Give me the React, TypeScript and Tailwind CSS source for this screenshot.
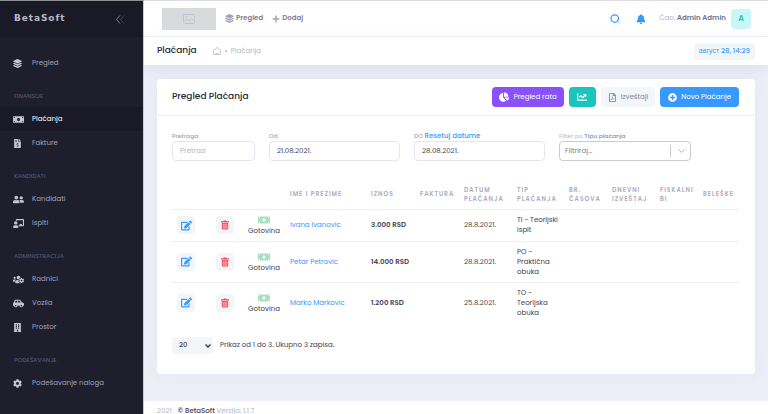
import type { ReactNode } from "react";
import {
  FaBell,
  FaBuilding,
  FaCarSide,
  FaChalkboardTeacher,
  FaChartLine,
  FaChartPie,
  FaCog,
  FaEdit,
  FaFileInvoiceDollar,
  FaLayerGroup,
  FaMoneyBill,
  FaPlus,
  FaPlusCircle,
  FaRegFilePdf,
  FaUserFriends,
  FaUsersCog,
} from "react-icons/fa";
import type { IconType } from "react-icons";

type MenuItem = { label: string; icon: IconType; active?: boolean; wide?: boolean };
type MenuSection = { title?: string; items: MenuItem[] };

const MENU: MenuSection[] = [
  { items: [{ label: "Pregled", icon: FaLayerGroup }] },
  {
    title: "Finansije",
    items: [
      { label: "Plaćanja", icon: FaMoneyBill, active: true, wide: true },
      { label: "Fakture", icon: FaFileInvoiceDollar },
    ],
  },
  {
    title: "Kandidati",
    items: [
      { label: "Kandidati", icon: FaUserFriends, wide: true },
      { label: "Ispiti", icon: FaChalkboardTeacher, wide: true },
    ],
  },
  {
    title: "Administracija",
    items: [
      { label: "Radnici", icon: FaUsersCog, wide: true },
      { label: "Vozila", icon: FaCarSide, wide: true },
      { label: "Prostor", icon: FaBuilding },
    ],
  },
  { title: "Podešavanje", items: [{ label: "Podešavanje naloga", icon: FaCog }] },
];

const PAYMENTS = [
  { name: "Ivana Ivanovic", amount: "3.000 RSD", date: "28.8.2021.", type: "TI - Teorijski ispit" },
  { name: "Petar Petrovic", amount: "14.000 RSD", date: "28.8.2021.", type: "PO - Praktična obuka" },
  { name: "Marko Markovic", amount: "1.200 RSD", date: "25.8.2021.", type: "TO - Teorijska obuka" },
];

const HEADINGS = [
  "",
  "",
  "",
  "Ime i prezime",
  "Iznos",
  "Faktura",
  "Datum plaćanja",
  "Tip plaćanja",
  "Br. časova",
  "Dnevni izveštaj",
  "Fiskalni bi",
  "Beleške",
];

function TrashIcon() {
  return (
    <svg viewBox="0 0 16 18" className="h-[10px] w-2" aria-hidden="true">
      <path d="M5.5 0h5l1 1.5H16V4H0V1.5h4.5z" fill="#f64e60" />
      <path d="M1.5 5h13v11.5A1.5 1.5 0 0 1 13 18H3a1.5 1.5 0 0 1-1.5-1.5z" fill="#f64e60" />
      <path d="M3 6.500h10v10H3z" fill="#f98896" />
    </svg>
  );
}

function Sidebar() {
  return (
    <aside className="relative z-10 w-36 shrink-0 border-t border-r border-t-[#8f8f96] border-r-[#c9c9d6] bg-[#1e1e2d]">
      <div className="flex h-9 items-center justify-between bg-[#1a1a27] pr-[18px] pl-[14px]">
        <a href="#" className="font-['DejaVu_Sans',sans-serif] text-[9px] font-bold tracking-widest text-[#b9b9c4]">
          BetaSoft
        </a>
        <button type="button" aria-label="Skupi meni">
          <svg viewBox="0 0 18 18" className="h-[9px] w-[9px]" fill="none" strokeWidth="2">
            <path d="M8 1 1 9l7 8" stroke="#7d8098" />
            <path d="m16 1-7 8 7 8" stroke="#414358" />
          </svg>
        </button>
      </div>
      <nav className="pt-[14px]">
        {MENU.map((section) => (
          <div key={section.items[0].label}>
            {section.title ? (
              <h4 className="flex h-8 items-end px-[14px] pb-[5px] text-[6px] leading-[11px] font-medium text-[#55566f] uppercase">
                {section.title}
              </h4>
            ) : null}
            {section.items.map((item) => (
              <a
                key={item.label}
                href="#"
                className={`flex h-6 items-center gap-2 px-[13px] text-[7px] ${
                  item.active ? "bg-[#1a1a27] text-white" : "text-[#a2a3b7]"
                }`}
              >
                <span className={`flex w-[11px] justify-start text-[#c4c5d0] ${item.wide ? "text-[11px]" : "text-[9px]"}`}>
                  <item.icon className="shrink-0" />
                </span>
                {item.label}
              </a>
            ))}
          </div>
        ))}
      </nav>
    </aside>
  );
}

function Topbar() {
  return (
    <header className="flex h-9 items-center justify-between border-b border-[#eff0f6] bg-white pr-[17px] pl-[18px]">
      <div className="flex items-center gap-[9px] text-[7px] font-semibold text-[#7b8099]">
        <div className="flex h-[22px] w-[54px] items-center justify-center bg-[#d9dadc]">
          <svg viewBox="0 0 24 20" className="h-[10px] w-3" fill="none" stroke="#c0c4ce" strokeWidth="2">
            <rect x="1" y="1" width="22" height="18" rx="2" />
            <path d="m3 15 5-5 4 4 5-4 4 4" />
            <circle cx="7" cy="6" r="1" />
          </svg>
        </div>
        <a href="#" className="flex items-center gap-[2px]">
          <FaLayerGroup className="text-[9px] text-[#a1a5b7]" />
          Pregled
        </a>
        <a href="#" className="flex items-center gap-[2px]">
          <FaPlus className="text-[8px] text-[#a1a5b7]" />
          Dodaj
        </a>
      </div>
      <div className="flex items-center text-[7px]">
        <button type="button" aria-label="Pretraži" className="mr-4">
          <svg viewBox="0 0 20 20" className="h-[10px] w-[10px]" fill="none" stroke="#3699ff">
            <circle cx="9.500" cy="9" r="7.500" strokeWidth="2.500" />
            <path d="m15 15 4 4" strokeWidth="2" opacity=".4" />
          </svg>
        </button>
        <button type="button" aria-label="Obaveštenja" className="mr-[13px] text-[10px] text-[#3699ff]">
          <FaBell />
        </button>
        <span className="text-[#b5b5c3]">
          Čao, <b className="font-semibold text-[#6c7293]">Admin Admin</b>
        </span>
        <span className="ml-[5px] flex h-5 w-5 items-center justify-center rounded-sm bg-[#c9f7f5] text-[8px] font-semibold text-[#1bc5bd]">
          A
        </span>
      </div>
    </header>
  );
}

function Subheader() {
  return (
    <div className="flex h-7 items-center justify-between bg-white px-[13px] shadow-[0_4px_14px_rgba(82,63,105,0.09)]">
      <div className="flex items-center gap-4">
        <h1 className="text-[9px] font-medium text-[#282a3c]">Plaćanja</h1>
        <div className="flex items-center gap-1 text-[7px] text-[#b5b5c3]">
          <svg viewBox="0 0 16 16" className="h-2 w-2" fill="none" stroke="#b5b5c3" strokeWidth="1.500">
            <path d="M1.500 6.500 8 1l6.500 5.500V15h-13zM5 12q3 2 6 0" />
          </svg>
          <span className="h-[2px] w-[2px] rounded-full bg-[#b5b5c3]" />
          <a href="#">Plaćanja</a>
        </div>
      </div>
      <button type="button" className="h-[17px] rounded-sm bg-[#f3f6f9] px-[5px] text-[7px] font-medium text-[#3699ff]">
        <span className="font-['Liberation_Sans',sans-serif]">август</span> 28, 14:29
      </button>
    </div>
  );
}

function Field({ id, label, value, placeholder }: { id: string; label: ReactNode; value?: string; placeholder?: string }) {
  return (
    <div>
      <label htmlFor={id} className="block h-[10px] text-[6px] leading-[10px] font-medium text-[#a1a5b7]">
        {label}
      </label>
      <input
        id={id}
        type="text"
        defaultValue={value}
        placeholder={placeholder}
        className="block h-5 w-full rounded-sm border border-[#e4e6ef] px-[7px] text-[7px] text-[#3f4254] outline-none placeholder:text-[#b5b5c3]"
      />
    </div>
  );
}

function Filters() {
  return (
    <div className="grid grid-cols-[83fr_131fr_131fr_132fr_34fr] gap-[14px]">
      <Field id="search" label="Pretraga" placeholder="Pretrazi" />
      <Field id="from" label="Od" value="21.08.2021." />
      <Field
        id="to"
        label={
          <>
            DO{" "}
            <a href="#" className="text-[7px] text-[#3699ff]">
              Resetuj datume
            </a>
          </>
        }
        value="28.08.2021."
      />
      <div>
        <label htmlFor="type" className="block h-[10px] text-[6px] leading-[10px] text-[#b5b5c3]">
          Filter po <b className="font-medium text-[#8a8ea5]">Tipu plaćanja</b>
        </label>
        <div className="relative">
          <select
            id="type"
            className="block h-5 w-full appearance-none rounded-sm border border-[#cccccc] bg-white px-[5px] text-[7px] text-[#7e8299] outline-none"
          >
            <option>Filtriraj...</option>
          </select>
          <span className="pointer-events-none absolute inset-y-1 right-0 flex w-[21px] items-center justify-center border-l border-[#cccccc]">
            <svg viewBox="0 0 14 8" className="h-1 w-[7px]" fill="none" stroke="#b8b8b8" strokeWidth="2">
              <path d="m1 1 6 6 6-6" />
            </svg>
          </span>
        </div>
      </div>
    </div>
  );
}

function PaymentsTable() {
  return (
    <table className="mt-5 w-full table-fixed text-left text-[7px] leading-[10px] text-[#3f4254]">
      <colgroup>
        <col className="w-[39px]" />
        <col className="w-[32px]" />
        <col className="w-[42px]" />
        <col className="w-[81px]" />
        <col className="w-[49px]" />
        <col className="w-[44px]" />
        <col className="w-[53px]" />
        <col className="w-[52px]" />
        <col className="w-[43px]" />
        <col className="w-[48px]" />
        <col className="w-[43px]" />
        <col className="w-[41px]" />
      </colgroup>
      <thead>
        <tr className="h-7 text-[6px] leading-[9px] tracking-[1px] text-[#a9abbd] uppercase">
          {HEADINGS.map((heading, i) => (
            <th key={i} className="pl-[5px] font-semibold">
              {heading}
            </th>
          ))}
        </tr>
      </thead>
      <tbody>
        {PAYMENTS.map((row) => (
          <tr key={row.name} className="h-8 border-t border-[#ebedf3]">
            <td className="pl-[5px]">
              <button
                type="button"
                aria-label="Izmeni"
                className="flex h-[18px] w-[18px] items-center justify-center rounded-sm bg-[#f3f6f9] text-[11px] text-[#3699ff]"
              >
                <FaEdit />
              </button>
            </td>
            <td className="pl-[5px]">
              <button
                type="button"
                aria-label="Obriši"
                className="flex h-[18px] w-[18px] items-center justify-center rounded-sm bg-[#f3f6f9]"
              >
                <TrashIcon />
              </button>
            </td>
            <td className="pl-[5px]">
              <div className="flex w-8 flex-col items-center">
                <FaMoneyBill className="text-[12px] text-[#a5dfc0]" />
                Gotovina
              </div>
            </td>
            <td className="pl-[5px]">
              <a href="#" className="text-[#3699ff]">
                {row.name}
              </a>
            </td>
            <td className="pl-[5px] font-semibold whitespace-nowrap">{row.amount}</td>
            <td />
            <td className="pl-[5px]">{row.date}</td>
            <td className="py-[5px] pl-[5px]">{row.type}</td>
            <td />
            <td />
            <td />
            <td />
          </tr>
        ))}
      </tbody>
    </table>
  );
}

function PaymentsCard() {
  return (
    <section className="rounded-sm bg-white shadow-[0_0_15px_rgba(82,63,105,0.05)]">
      <div className="flex h-[37px] items-center justify-between border-b border-[#ebedf3] pr-4 pl-[15px]">
        <h2 className="text-[9px] font-medium text-[#282a3c]">Pregled Plaćanja</h2>
        <div className="flex gap-[5px] text-[7px] text-white">
          <button type="button" className="flex h-5 items-center gap-[5px] rounded-sm bg-[#8950fc] px-[7px]">
            <FaChartPie className="text-[10px]" />
            Pregled rata
          </button>
          <button type="button" aria-label="Statistika" className="flex h-5 w-[27px] items-center justify-center rounded-sm bg-[#1bc5bd]">
            <FaChartLine className="text-[10px]" />
          </button>
          <button type="button" className="flex h-5 items-center gap-1 rounded-sm bg-[#f3f6f9] px-[7px] text-[#7e8299]">
            <FaRegFilePdf className="text-[9px]" />
            Izveštaji
          </button>
          <button type="button" className="flex h-5 items-center gap-1 rounded-sm bg-[#3699ff] px-2">
            <FaPlusCircle className="text-[9px]" />
            Novo Plaćanje
          </button>
        </div>
      </div>
      <div className="pt-[15px] pr-4 pb-5 pl-[15px]">
        <Filters />
        <PaymentsTable />
        <div className="mt-[14px] flex items-center gap-[7px] text-[7px] text-[#3f4254]">
          <div className="relative">
            <select
              aria-label="Broj zapisa po strani"
              className="block h-[17px] w-[41px] appearance-none rounded-sm bg-[#f3f6f9] pl-[7px] font-medium outline-none"
            >
              <option>20</option>
            </select>
            <svg
              viewBox="0 0 12 8"
              className="pointer-events-none absolute top-[7px] right-[2px] h-1 w-[6px]"
              fill="none"
              stroke="#3f4254"
              strokeWidth="3"
            >
              <path d="m1 1 5 5 5-5" />
            </svg>
          </div>
          <span>Prikaz od 1 do 3. Ukupno 3 zapisa.</span>
        </div>
      </div>
    </section>
  );
}

export default function App() {
  return (
    <div className="flex min-h-screen bg-[#eeeef8] font-[Poppins,Inter,sans-serif] [font-feature-settings:'cv11']">
      <Sidebar />
      <div className="flex min-w-0 flex-1 flex-col border-t border-[#dedee2]">
        <Topbar />
        <Subheader />
        <main className="flex-1 px-[13px] pt-[14px] pb-[27px]">
          <PaymentsCard />
        </main>
        <footer className="flex gap-[6px] bg-white px-[13px] pt-[5px] pb-2 text-[7px] leading-[10px] text-[#b5b5c3]">
          <span>2021</span>
          <span>
            <a href="#" className="font-medium text-[#3f4254]">
              © BetaSoft
            </a>{" "}
            Verzija: 1.1.7
          </span>
        </footer>
      </div>
    </div>
  );
}
